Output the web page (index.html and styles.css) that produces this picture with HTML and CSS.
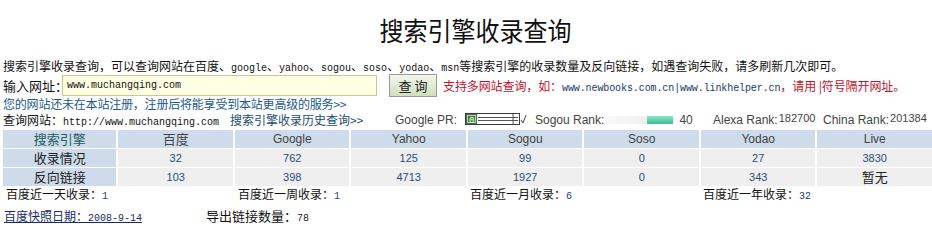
FILE: index.html
```html
<!DOCTYPE html>
<html lang="zh">
<head>
<meta charset="utf-8">
<title>搜索引擎收录查询</title>
<link rel="stylesheet" href="styles.css">
</head>
<body>
<div class="page">
  <h1 class="title">搜索引擎收录查询</h1>
  <div class="intro">搜索引擎收录查询，可以查询网站在百度、<span class="mono">google</span>、<span class="mono">yahoo</span>、<span class="mono">sogou</span>、<span class="mono">soso</span>、<span class="mono">yodao</span>、<span class="mono">msn</span>等搜索引擎的收录数量及反向链接，如遇查询失败，请多刷新几次即可。</div>
  <div class="query-row">
    <span class="label">输入网址：</span>
    <span class="url-input">www.muchangqing.com</span>
    <span class="btn">查 询</span>
    <span class="hint">支持多网站查询，如：<span class="mono dark">www.newbooks.com.cn|www.linkhelper.cn</span>，请用 |符号隔开网址。</span>
  </div>
  <div class="reg">您的网站还未在本站注册，注册后将能享受到本站更高级的服务&gt;&gt;</div>
  <div class="info">
    <span class="site">查询网站：<span class="mono">http://www.muchangqing.com</span></span>
    <span class="history">搜索引擎收录历史查询&gt;&gt;</span>
    <span class="metric pr">Google PR:
      <svg class="prbar" width="62" height="13" viewBox="0 0 62 13">
        <rect x="0.5" y="0.5" width="54" height="11" fill="#fff" stroke="#3c3c3c"/>
        <rect x="1" y="1" width="11" height="10" fill="#3f7d3f"/>
        <rect x="2.5" y="2.5" width="8" height="7" fill="none" stroke="#cfe6cf" stroke-width="0.8"/>
        <text x="4" y="9.5" font-family="Liberation Mono, monospace" font-size="9" fill="#fff">0</text>
        <line x1="13" y1="4.5" x2="53" y2="4.5" stroke="#555"/>
        <line x1="13" y1="7.5" x2="53" y2="7.5" stroke="#555"/>
        <line x1="48" y1="1" x2="48" y2="11" stroke="#555"/>
        <path d="M56 7 L58 10 L61 2" fill="none" stroke="#444" stroke-width="1"/>
      </svg>
    </span>
    <span class="metric sogou">Sogou Rank:
      <span class="rankbar"><span class="rankfill"></span></span>
      <span class="rankval">40</span>
    </span>
    <span class="metric alexa">Alexa Rank: <span class="small">182700</span></span>
    <span class="metric china">China Rank: <span class="small">201384</span></span>
  </div>
  <table class="stats">
    <tr class="head">
      <th class="first">搜索引擎</th><th class="cn">百度</th><th>Google</th><th>Yahoo</th><th>Sogou</th><th>Soso</th><th>Yodao</th><th>Live</th>
    </tr>
    <tr>
      <th class="first">收录情况</th><td>32</td><td>762</td><td>125</td><td>99</td><td>0</td><td>27</td><td>3830</td>
    </tr>
    <tr>
      <th class="first">反向链接</th><td>103</td><td>398</td><td>4713</td><td>1927</td><td>0</td><td>343</td><td class="cn">暂无</td>
    </tr>
  </table>
  <div class="recent">
    <span>百度近一天收录：<span class="num">1</span></span>
    <span>百度近一周收录：<span class="num">1</span></span>
    <span>百度近一月收录：<span class="num">6</span></span>
    <span>百度近一年收录：<span class="num">32</span></span>
  </div>
  <div class="extra">
    <a class="snap" href="#">百度快照日期：<span class="mono">2008-9-14</span></a>
    <span class="out">导出链接数量：<span class="num">78</span></span>
  </div>
</div>
</body>
</html>
```

FILE: styles.css
```css
html, body {
  margin: 0;
  padding: 0;
  background: #fff;
}
body {
  font-family: "Noto Sans CJK SC", "Liberation Sans", sans-serif;
  font-size: 12px;
  color: #111;
}
.page {
  padding: 0 0 0 3px;
  width: 929px;
  overflow: hidden;
}
.mono {
  font-family: "Liberation Mono", "Noto Sans CJK SC", monospace;
  font-size: 10px;
}
.title {
  margin: 0;
  height: 58px;
  display: flex;
  align-items: center;
  justify-content: center;
  padding-left: 16px;
  font-size: 24px;
  font-weight: 400;
  color: #111;
  transform: scaleY(1.1);
}
.intro {
  height: 15px;
  line-height: 15px;
  white-space: nowrap;
  font-size: 12px;
}
.query-row {
  height: 24px;
  display: flex;
  align-items: center;
  white-space: nowrap;
}
.label {
  font-size: 13px;
  width: 59px;
}
.url-input {
  box-sizing: border-box;
  width: 315px;
  height: 21px;
  border: 1px solid #c9c98e;
  background: #ffffe4;
  padding: 0 4px;
  line-height: 19px;
  font-family: "Liberation Mono", monospace;
  font-size: 10px;
}
.btn {
  box-sizing: border-box;
  margin-left: 12px;
  width: 48px;
  height: 23px;
  border: 1px solid #9a9a9a;
  background: linear-gradient(#f2f7ea, #cfe0bd);
  display: flex;
  align-items: center;
  justify-content: center;
  font-size: 13px;
  color: #222;
}
.hint {
  margin-left: 6px;
  color: #c4102a;
  font-size: 12px;
  letter-spacing: -0.1px;
}
.hint .dark {
  color: #1c3a6a;
}
.reg {
  height: 14px;
  line-height: 14px;
  color: #1a5a8c;
  white-space: nowrap;
  letter-spacing: -0.2px;
}
.info {
  height: 17px;
  display: flex;
  align-items: center;
  white-space: nowrap;
}
.site {
  width: 227px;
}
.history {
  color: #174d72;
  width: 165px;
}
.metric {
  font-family: "Liberation Sans", sans-serif;
  font-size: 12px;
  color: #444;
  display: flex;
  align-items: center;
}
.pr {
  width: 140px;
}
.prbar {
  margin-left: 8px;
}
.sogou {
  width: 178px;
}
.rankbar {
  margin-left: 2px;
  width: 67px;
  height: 8px;
  background: linear-gradient(90deg, #fafafa, #e6e6e6);
  display: flex;
  justify-content: flex-end;
}
.rankfill {
  width: 26px;
  height: 8px;
  background: linear-gradient(#8fe0c4, #3cbf96);
}
.rankval {
  margin-left: 6px;
}
.alexa {
  width: 110px;
}
.small {
  font-size: 11px;
  position: relative;
  top: -2px;
  margin-left: 1px;
}
.stats {
  border-collapse: separate;
  border-spacing: 2px 1px;
  margin-left: -2px;
  margin-top: 1px;
  table-layout: fixed;
  width: 933px;
}
.stats th, .stats td {
  height: 18px;
  line-height: 16px;
  padding: 0;
  text-align: center;
  font-weight: normal;
  font-family: "Liberation Sans", sans-serif;
  font-size: 12px;
  width: 114px;
}
.stats .head th {
  background: #cddbea;
  color: #444;
}
.stats th.first {
  background: #cddbea;
  width: 113px;
  font-family: "Noto Sans CJK SC", sans-serif;
  font-size: 13px;
  color: #222;
}
.stats .head th.first {
  color: #1f5f66;
}
.stats .cn {
  font-family: "Noto Sans CJK SC", sans-serif;
  font-size: 13px;
  color: #222;
}
.stats td {
  background: #efefef;
  color: #2a4e80;
  font-size: 11px;
}
.stats td.cn {
  color: #222;
}
.recent {
  height: 13px;
  line-height: 13px;
  display: grid;
  grid-template-columns: 232px 232px 233px 232px;
  align-items: center;
  padding-left: 3px;
  white-space: nowrap;
}
.num {
  font-family: "Liberation Mono", monospace;
  font-size: 10px;
  color: #1c3f7a;
}
.extra {
  height: 14px;
  line-height: 14px;
  display: flex;
  align-items: center;
  padding-top: 10px;
  white-space: nowrap;
}
.snap {
  color: #1a2a6a;
  text-decoration: underline;
  width: 202px;
  margin-left: 1px;
}
.out {
  font-size: 13px;
}
.out .num {
  color: #222;
}
```
